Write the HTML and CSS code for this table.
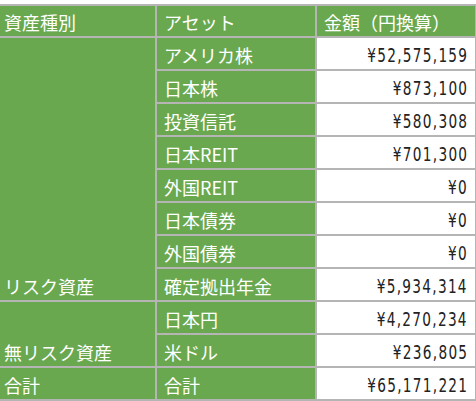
FILE: index.html
```html
<!DOCTYPE html>
<html>
<head>
<meta charset="UTF-8">
<title>資産一覧</title>
<link rel="stylesheet" href="styles.css">
</head>
<body>
<table class="assets">
  <tr class="head">
    <td class="kind">資産種別</td>
    <td class="name">アセット</td>
    <td class="amount-head">金額（円換算）</td>
  </tr>
  <tr>
    <td class="kind" rowspan="8">リスク資産</td>
    <td class="name">アメリカ株</td>
    <td class="amount"><span>¥52,575,159</span></td>
  </tr>
  <tr><td class="name">日本株</td><td class="amount"><span>¥873,100</span></td></tr>
  <tr><td class="name">投資信託</td><td class="amount"><span>¥580,308</span></td></tr>
  <tr><td class="name">日本REIT</td><td class="amount"><span>¥701,300</span></td></tr>
  <tr><td class="name">外国REIT</td><td class="amount"><span>¥0</span></td></tr>
  <tr><td class="name">日本債券</td><td class="amount"><span>¥0</span></td></tr>
  <tr><td class="name">外国債券</td><td class="amount"><span>¥0</span></td></tr>
  <tr><td class="name">確定拠出年金</td><td class="amount"><span>¥5,934,314</span></td></tr>
  <tr>
    <td class="kind" rowspan="2">無リスク資産</td>
    <td class="name">日本円</td>
    <td class="amount"><span>¥4,270,234</span></td>
  </tr>
  <tr><td class="name">米ドル</td><td class="amount"><span>¥236,805</span></td></tr>
  <tr>
    <td class="kind">合計</td>
    <td class="name">合計</td>
    <td class="amount"><span>¥65,171,221</span></td>
  </tr>
</table>
</body>
</html>
```

FILE: styles.css
```css
body {
	margin: 0;
	padding-top: 4px;
	background: #fff;
	font-family: "Noto Sans CJK JP", sans-serif;
	overflow: hidden;
}

.assets {
	border-collapse: collapse;
	margin-left: -2px;
	table-layout: fixed;
	width: 479px;
}

.assets td {
	border: 2px solid #b5b5b5;
	height: 27px;
	padding: 3px 6px 0;
	font-size: 18px;
	line-height: 27px;
	color: #fff;
	background: #6aa84f;
	white-space: nowrap;
	overflow: hidden;
}

.assets .kind {
	width: 145px;
	padding-left: 4px;
	vertical-align: bottom;
}

.assets .name {
	width: 145px;
	padding-left: 7px;
}

.assets .amount-head {
	padding-left: 7px;
}

.assets .amount {
	background: #fff;
	color: #222;
	text-align: right;
	padding-right: 7px;
}

.amount span {
	display: inline-block;
	font-family: "DejaVu Sans Condensed", "DejaVu Sans", sans-serif;
	font-size: 19px;
	letter-spacing: 1.6px;
	transform: scaleX(.8);
	transform-origin: right center;
}
```
